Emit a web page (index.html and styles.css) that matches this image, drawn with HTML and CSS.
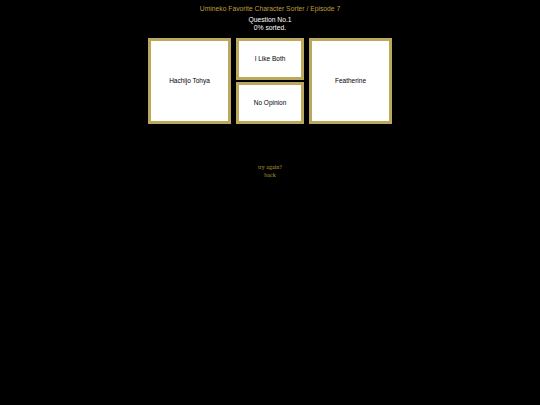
FILE: index.html
```html
<!DOCTYPE html>
<html>
<head>
<meta charset="utf-8">
<link rel="stylesheet" href="styles.css">
</head>
<body>
<div class="page">
  <div class="title">Umineko Favorite Character Sorter / Episode 7</div>
  <div class="status">
    <div>Question No.1</div>
    <div>0% sorted.</div>
  </div>
  <div class="board">
    <div class="choice left">Hachijo Tohya</div>
    <div class="choice mid-top">I Like Both</div>
    <div class="choice mid-bottom">No Opinion</div>
    <div class="choice right">Featherine</div>
  </div>
  <div class="links">
    <div>try again?</div>
    <div>back</div>
  </div>
</div>
</body>
</html>
```

FILE: styles.css
```css
html, body {
  margin: 0;
  padding: 0;
  background: #000;
  width: 540px;
  height: 405px;
  overflow: hidden;
}
.page {
  display: flex;
  flex-direction: column;
  align-items: center;
  padding-top: 5px;
  font-family: "Liberation Sans", Arial, sans-serif;
}
.title {
  color: #bf9f3a;
  font-size: 6.75px;
  line-height: 8px;
  height: 8px;
}
.status {
  margin-top: 3px;
  color: #fff;
  font-size: 6.75px;
  line-height: 7.5px;
  text-align: center;
}
.board {
  margin-top: 6.5px;
  display: grid;
  grid-template-columns: 83px 68px 83px;
  grid-template-rows: 42px 42px;
  column-gap: 5px;
  row-gap: 2px;
}
.choice {
  box-sizing: border-box;
  background: #fff;
  border: 3px solid #bca75e;
  color: #000;
  font-size: 6.5px;
  display: flex;
  align-items: center;
  justify-content: center;
}
.left { grid-column: 1; grid-row: 1 / 3; }
.mid-top { grid-column: 2; grid-row: 1; }
.mid-bottom { grid-column: 2; grid-row: 2; }
.right { grid-column: 3; grid-row: 1 / 3; }
.links {
  margin-top: 39px;
  color: #b8962e;
  font-family: "Liberation Serif", "Times New Roman", serif;
  font-size: 6px;
  line-height: 8px;
  text-align: center;
}
```
